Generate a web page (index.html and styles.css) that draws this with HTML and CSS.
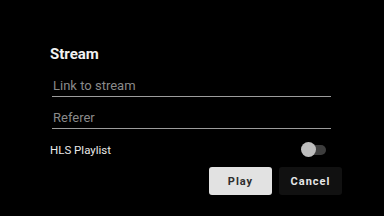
FILE: index.html
```html
<!DOCTYPE html>
<html lang="en">
<head>
    <meta charset="UTF-8">
    <title>Stream</title>
    <link rel="stylesheet" href="styles.css">
</head>
<body>
    <div class="dialog">
        <h2 class="dialog-title">Stream</h2>

        <div class="field">
            <input type="text" placeholder="Link to stream">
        </div>
        <div class="field field-second">
            <input type="text" placeholder="Referer">
        </div>

        <div class="switch-row">
            <span class="switch-label">HLS Playlist</span>
            <span class="switch">
                <span class="switch-thumb"></span>
            </span>
        </div>

        <div class="actions">
            <button class="btn btn-play">Play</button>
            <button class="btn btn-cancel">Cancel</button>
        </div>
    </div>
</body>
</html>
```

FILE: styles.css
```css
body {
    margin: 0;
    padding: 0;
    background-color: #000000;
    font-family: Roboto, "Liberation Sans", sans-serif;
    width: 384px;
    height: 216px;
    overflow: hidden;
}

.dialog {
    display: flex;
    flex-direction: column;
    width: 292px;
    margin-left: 50px;
    padding-top: 45px;
}

.dialog-title {
    margin: 0;
    color: #f2f2f2;
    font-size: 15px;
    line-height: 18px;
    font-weight: 700;
}

.field {
    margin: 15px 11px 0 2px;
    border-bottom: 1px solid #9c9c9c;
    padding-bottom: 2px;
}

.field-second {
    margin-top: 13px;
}

.field input {
    display: block;
    width: 100%;
    box-sizing: border-box;
    border: none;
    outline: none;
    background: transparent;
    padding: 0 0 0 1px;
    margin: 0;
    height: 16px;
    font-family: Roboto, "Liberation Sans", sans-serif;
    font-size: 13px;
    line-height: 16px;
    color: #e0e0e0;
}

.field input::placeholder {
    color: #8a8a8a;
}

.switch-row {
    display: flex;
    align-items: center;
    justify-content: space-between;
    height: 16px;
    margin-top: 13px;
    margin-right: 16px;
}

.switch-label {
    color: #e8e8e8;
    font-size: 11.5px;
    line-height: 16px;
}

.switch {
    position: relative;
    width: 23px;
    height: 10px;
    border-radius: 5px;
    background-color: #3d3d3d;
}

.switch-thumb {
    position: absolute;
    left: -2px;
    top: -3px;
    width: 15px;
    height: 15px;
    border-radius: 50%;
    background-color: #bdbdbd;
}

.actions {
    display: flex;
    justify-content: flex-end;
    gap: 7px;
    margin-top: 9px;
}

.btn {
    width: 63px;
    height: 28px;
    border: none;
    border-radius: 3px;
    padding: 0;
    font-family: Roboto, "Liberation Sans", sans-serif;
    font-size: 11px;
    font-weight: 700;
    letter-spacing: 1px;
}

.btn-play {
    background-color: #e2e2e2;
    color: #2e2e2e;
}

.btn-cancel {
    background-color: #111111;
    color: #e6e6e6;
}
```
